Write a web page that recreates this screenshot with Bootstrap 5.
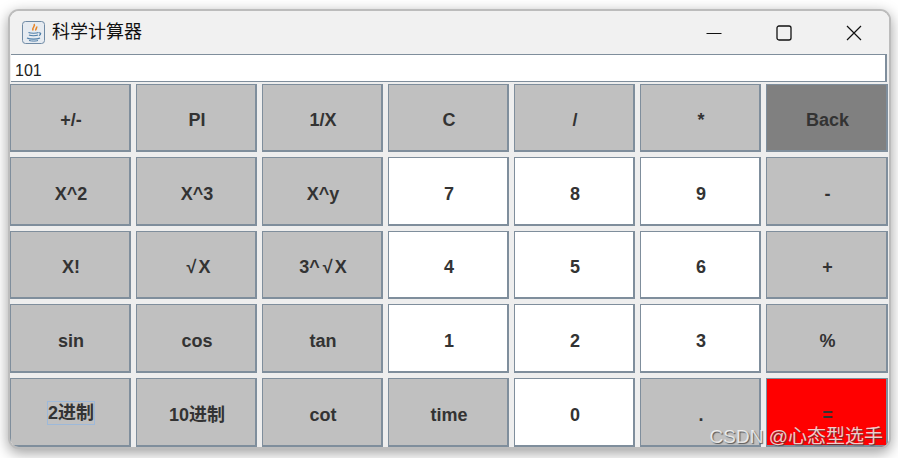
<!DOCTYPE html>
<html>
<head>
  <meta charset="UTF-8">
  <title>科学计算器</title>
  <link href="https://cdn.jsdelivr.net/npm/bootstrap@5.3.0/dist/css/bootstrap.min.css" rel="stylesheet">
  <style>
    html, body { height: 100%; }
    body { background: #fff; padding: 11px 0 0 10px; overflow: hidden; font-family: "Liberation Sans", "Noto Sans CJK SC", sans-serif; }
    .calc-window { position: relative; width: 879px; height: 436px; background: #eeeeee; border-radius: 9px; overflow: hidden; }
    .calc-frame { width: 879px; height: 436px; border-radius: 9px; box-shadow: 0 0 0 2px #bcbcbc, 0 4px 14px 2px rgba(0,0,0,.38); }
    .title-strip { height: 43px; background: #f1f1f1; padding-left: 12px; }
    .title-strip .win-name { font-size: 18px; color: #111; margin-left: 6px; }
    .win-btn { width: 70px; height: 43px; }
    .calc-input.form-control { height: 28px; width: 876px; margin-left: 1px; padding: 5px 0 0 4px; font-size: 16px; line-height: 20px; color: #222; background: #fff; border-style: solid; border-color: #7f8e9c; border-width: 1px 2px 1px 0; border-radius: 0; box-shadow: none; }
    .key-grid { display: grid; grid-template-columns: repeat(6, 121px) 122px; grid-template-rows: 68px 69px 68px 69px 69px; column-gap: 5px; row-gap: 5px; margin-top: 2px; }
    .key-grid .btn { --bs-btn-padding-x: 0; --bs-btn-padding-y: 0; padding: 5px 0 0 2px; border-radius: 0; border-style: solid; border-color: #7f8e9c; border-width: 1px 2px 2px 1px; background: #c0c0c0; color: #333; font-weight: 700; font-size: 18px; line-height: 1; display: flex; align-items: center; justify-content: center; }
    .key-grid .btn.key-white { background: #fff; border-width: 1px; border-right-width: 2px; border-bottom-width: 2px; }
    .key-grid .btn.key-dark { background: #808080; }
    .key-grid .btn.key-red { background: #ff0000; }
    .focus-box { border: 1px solid #9db9da; padding: 2px 0; margin-top: -4px; }
    .root-sign { margin: 0 2px 0 3px; }
    .wm-text { position: absolute; right: 6px; bottom: 1px; font-size: 19px; line-height: 19px; color: rgba(255,255,255,.78); text-shadow: 1px 1px 1px rgba(60,60,60,.8); white-space: nowrap; }
  </style>
</head>
<body>
  <div class="calc-frame">
    <div class="calc-window">
      <div class="title-strip d-flex align-items-center">
        <svg width="24" height="24" viewBox="0 0 24 24">
          <rect x="0.5" y="0.5" width="22" height="22" rx="3" fill="#e6ebf1" stroke="#6f8aa5"/>
          <path d="M12 3c2 2-2.500 3.500-1 6.500M14.500 5.500c1 1.500-1.500 2.500-.5 4" fill="none" stroke="#e8862a" stroke-width="1.600"/>
          <path d="M6.500 11.500c2 1 8 1 10 0M7 14c2 1 7 1 9 0M17 12c2-.5 2.500 1.500 0 2.500M5 17c3 1.500 10 1.500 13 0" fill="none" stroke="#4f7ea8" stroke-width="1.200"/>
          <path d="M7 19.500c3 .8 7 .8 9 0" fill="none" stroke="#4f7ea8"/>
        </svg>
        <span class="win-name">科学计算器</span>
        <div class="ms-auto d-flex">
          <div class="win-btn d-flex align-items-center justify-content-center">
            <svg width="16" height="16" viewBox="0 0 16 16"><path d="M0.500 8.500h15" stroke="#111" fill="none"/></svg>
          </div>
          <div class="win-btn d-flex align-items-center justify-content-center">
            <svg width="16" height="16" viewBox="0 0 16 16"><rect x="1" y="1" width="14" height="14" rx="2" fill="none" stroke="#111" stroke-width="1.300"/></svg>
          </div>
          <div class="win-btn d-flex align-items-center justify-content-center">
            <svg width="16" height="16" viewBox="0 0 16 16"><path d="M1 1l14 14M15 1L1 15" stroke="#111" stroke-width="1.200" fill="none"/></svg>
          </div>
        </div>
      </div>
      <input class="form-control calc-input" type="text" value="101">
      <div class="key-grid">
        <button class="btn">+/-</button>
        <button class="btn">PI</button>
        <button class="btn">1/X</button>
        <button class="btn">C</button>
        <button class="btn">/</button>
        <button class="btn">*</button>
        <button class="btn key-dark">Back</button>

        <button class="btn">X^2</button>
        <button class="btn">X^3</button>
        <button class="btn">X^y</button>
        <button class="btn key-white">7</button>
        <button class="btn key-white">8</button>
        <button class="btn key-white">9</button>
        <button class="btn">-</button>

        <button class="btn">X!</button>
        <button class="btn"><span class="root-sign">√</span>X</button>
        <button class="btn">3^<span class="root-sign">√</span>X</button>
        <button class="btn key-white">4</button>
        <button class="btn key-white">5</button>
        <button class="btn key-white">6</button>
        <button class="btn">+</button>

        <button class="btn">sin</button>
        <button class="btn">cos</button>
        <button class="btn">tan</button>
        <button class="btn key-white">1</button>
        <button class="btn key-white">2</button>
        <button class="btn key-white">3</button>
        <button class="btn">%</button>

        <button class="btn"><span class="focus-box">2进制</span></button>
        <button class="btn">10进制</button>
        <button class="btn">cot</button>
        <button class="btn">time</button>
        <button class="btn key-white">0</button>
        <button class="btn">.</button>
        <button class="btn key-red">=</button>
      </div>
      <div class="wm-text">CSDN @心态型选手</div>
    </div>
  </div>
  <script src="https://cdn.jsdelivr.net/npm/bootstrap@5.3.0/dist/js/bootstrap.bundle.min.js"></script>
</body>
</html>
